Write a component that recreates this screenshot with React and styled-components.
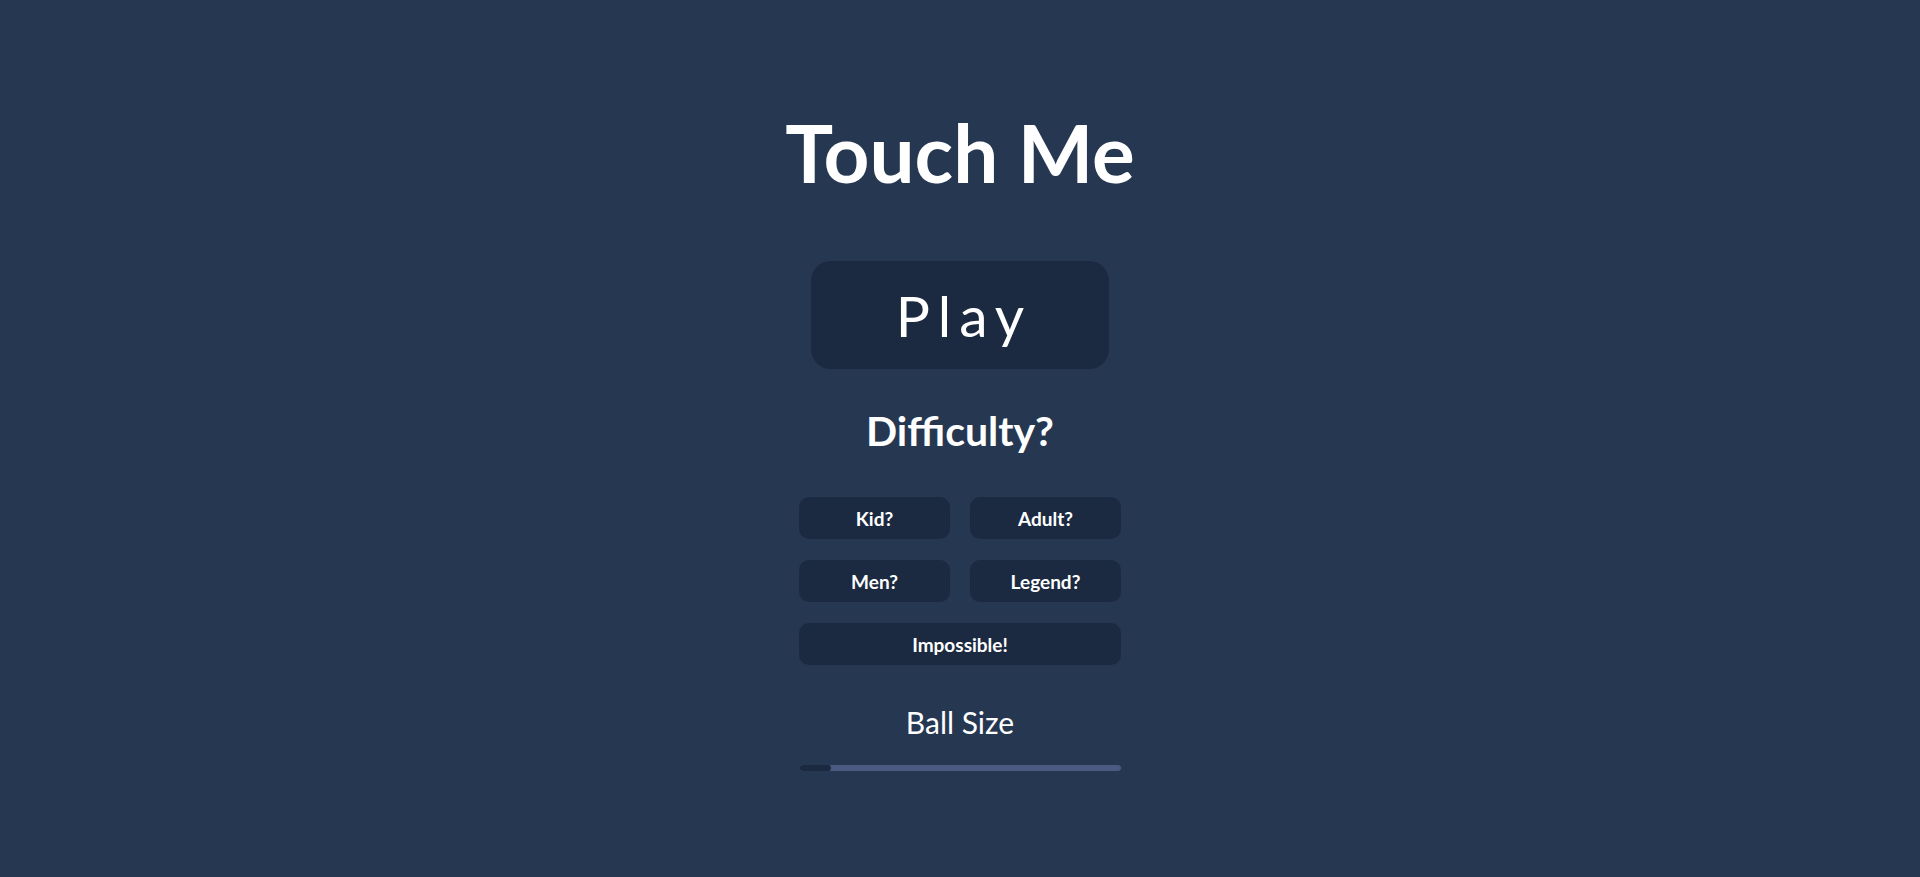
import React, { useState } from "react";
import styled, { createGlobalStyle } from "styled-components";

const GlobalStyle = createGlobalStyle`
  html, body {
    margin: 0;
    padding: 0;
    background-color: #263751;
  }
  body {
    font-family: Lato, "Open Sans", sans-serif;
    color: #ffffff;
  }
`;

const Page = styled.div`
  min-height: 877px;
  display: flex;
  flex-direction: column;
  align-items: center;
  padding-top: 112px;
  box-sizing: border-box;
`;

const Title = styled.h1`
  margin: 0;
  font-size: 80px;
  line-height: 80px;
  font-weight: 700;
`;

const PlayButton = styled.button`
  margin-top: 69px;
  width: 298px;
  height: 108px;
  border: none;
  border-radius: 20px;
  background-color: #1b2a40;
  color: #ffffff;
  font-family: inherit;
  font-size: 57px;
  letter-spacing: 8px;
  padding: 0 0 0 8px;
  cursor: pointer;
`;

const SubTitle = styled.h2`
  margin: 41px 0 0;
  font-size: 41px;
  line-height: 41px;
  font-weight: 700;
`;

const Levels = styled.div`
  margin-top: 46px;
  display: grid;
  grid-template-columns: 151px 151px;
  column-gap: 20px;
  row-gap: 21px;
`;

const Level = styled.button`
  grid-column: ${(props) => (props.wide ? "1 / span 2" : "auto")};
  height: 42px;
  border: none;
  border-radius: 10px;
  background-color: #1b2a40;
  color: #ffffff;
  font-family: inherit;
  font-size: 19px;
  font-weight: 700;
  cursor: pointer;
`;

const Label = styled.div`
  margin-top: 42px;
  font-size: 30px;
  line-height: 30px;
`;

const Track = styled.div`
  margin-top: 28px;
  width: 322px;
  height: 6px;
  border-radius: 3px;
  background-color: #4a5a80;
  overflow: hidden;
`;

const Fill = styled.div`
  height: 100%;
  border-radius: 3px;
  background-color: #1b2a40;
`;

const levels = ["Kid?", "Adult?", "Men?", "Legend?"];

const App = () => {
  const [level, setLevel] = useState("Kid?");
  const [size] = useState(10);

  return (
    <>
      <GlobalStyle />
      <Page>
        <Title>Touch Me</Title>
        <PlayButton type="button">Play</PlayButton>
        <SubTitle>Difficulty?</SubTitle>
        <Levels>
          {levels.map((l) => (
            <Level key={l} type="button" onClick={() => setLevel(l)}>
              {l}
            </Level>
          ))}
          <Level wide type="button" onClick={() => setLevel("Impossible!")}>
            Impossible!
          </Level>
        </Levels>
        <Label>Ball Size</Label>
        <Track>
          <Fill style={{ width: `${size}%` }} />
        </Track>
      </Page>
    </>
  );
};

export default App;
